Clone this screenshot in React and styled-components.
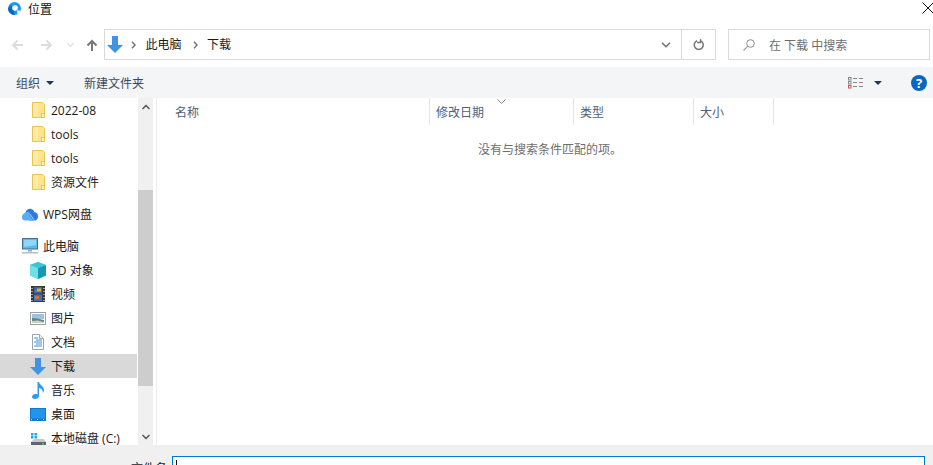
import React from "react";
import styled, { createGlobalStyle } from "styled-components";
import { FiChevronDown, FiChevronUp } from "react-icons/fi";

const GlobalStyle = createGlobalStyle`
	html, body {
		margin: 0;
		padding: 0;
		width: 933px;
		height: 465px;
		overflow: hidden;
		background: #fff;
		font-family: "Open Sans", "Noto Sans CJK SC", sans-serif;
		font-size: 12px;
		color: #1a1a1a;
	}
	* {
		box-sizing: border-box;
	}
`;

const treeItems = [
	{ label: "2022-08", icon: "folder", level: 1, gap: 0 },
	{ label: "tools", icon: "folder", level: 1, gap: 0 },
	{ label: "tools", icon: "folder", level: 1, gap: 0 },
	{ label: "资源文件", icon: "folder", level: 1, gap: 0 },
	{ label: "WPS网盘", icon: "cloud", level: 0, gap: 8 },
	{ label: "此电脑", icon: "pc", level: 0, gap: 8 },
	{ label: "3D 对象", icon: "cube", level: 1, gap: 0 },
	{ label: "视频", icon: "film", level: 1, gap: 0 },
	{ label: "图片", icon: "picture", level: 1, gap: 0 },
	{ label: "文档", icon: "doc", level: 1, gap: 0 },
	{ label: "下载", icon: "download", level: 1, gap: 0, selected: true },
	{ label: "音乐", icon: "music", level: 1, gap: 0 },
	{ label: "桌面", icon: "desktop", level: 1, gap: 0 },
	{ label: "本地磁盘 (C:)", icon: "disk", level: 1, gap: 0 },
];

const columns = [
	{ label: "名称", width: 270, pad: 15 },
	{ label: "修改日期", width: 144, pad: 6, sorted: true },
	{ label: "类型", width: 120, pad: 6 },
	{ label: "大小", width: 80, pad: 6 },
];

function TreeIcon({ name }) {
	switch (name) {
		case "folder":
			return (
				<svg width="13" height="16" viewBox="0 0 13 16">
					<path d="M.5.500h10l2 2v13H.5z" fill="#fde58e" stroke="#e9c54f" />
					<path d="M1 1h5v14H1z" fill="#fdeaa4" />
					<path d="M9.500 15.500v-4h3v4z" fill="#fff6d0" stroke="#e9c54f" />
				</svg>
			);
		case "cloud":
			return (
				<svg width="17" height="13" viewBox="0 0 17 13">
					<path d="M3.500 5C4 2 6.500 0 9 .3c2.300.3 3.800 2 4.200 3.700C15.500 4 17 6 17 8.500 17 11 15 13 13 13H8z" fill="#2a7be4" />
					<path d="M3 5c2-.5 3.500.3 4.500 1.500L12 13H3c-1.700 0-3-1.300-3-3.500C0 7 1.300 5.400 3 5z" fill="#57aef5" />
					<path d="M5 4.500c1.500 0 3 1 4 2.300l3.700 5.200" fill="none" stroke="#fff" strokeWidth=".7" />
				</svg>
			);
		case "pc":
			return (
				<svg width="16" height="16" viewBox="0 0 16 16">
					<rect x=".5" y=".5" width="15" height="10.500" fill="#5cb8f5" stroke="#4a6f8c" />
					<path d="M2 2h12v5L2 9z" fill="#8fd8fb" />
					<rect x="6" y="11.500" width="4" height="2" fill="#9aa7b2" />
					<rect y="14" width="16" height="1.500" fill="#b4bec7" />
				</svg>
			);
		case "cube":
			return (
				<svg width="16" height="17" viewBox="0 0 16 17">
					<path d="M8 0l8 3v10.500L8 17l-8-3.500V3z" fill="#4fd2dd" />
					<path d="M0 3l8 3v11l-8-3.500z" fill="#6fe0e6" />
					<path d="M16 3L8 6v11l8-3.500z" fill="#139ab3" />
					<path d="M8 0l8 3-8 3-8-3z" fill="#3cc4d6" />
				</svg>
			);
		case "film":
			return (
				<svg width="14" height="16" viewBox="0 0 14 16">
					<rect width="14" height="16" fill="#3a3a3a" />
					<rect x="3" y="1" width="8" height="6.500" fill="#3c62b8" />
					<rect x="3" y="8.500" width="8" height="6.500" fill="#3c72d0" />
					<rect x="6" y="2.500" width="4" height="3" fill="#e0b030" />
					<rect x="4" y="4" width="2" height="2" fill="#3f9a58" />
					<rect x="4" y="10" width="4" height="3" fill="#d9702c" />
					<path d="M1 2v1M1 5v1M1 8v1M1 11v1M1 14v1M13 2v1M13 5v1M13 8v1M13 11v1M13 14v1" stroke="#fff" />
				</svg>
			);
		case "picture":
			return (
				<svg width="16" height="13" viewBox="0 0 16 13">
					<rect x=".5" y=".5" width="15" height="12" fill="#fff" stroke="#9aa0a5" />
					<rect x="2" y="2" width="12" height="5" fill="#9cc2e2" />
					<path d="M2 6l5 .5L14 8v3H2z" fill="#5f8a72" />
					<path d="M2 9l6-.5 6 1.500V11H2z" fill="#c9cfc4" />
				</svg>
			);
		case "doc":
			return (
				<svg width="12" height="16" viewBox="0 0 12 16">
					<path d="M.5.500h7l4 4v11H.5z" fill="#fff" stroke="#9aa3ab" />
					<path d="M7.500.500v4h4" fill="#eef2f5" stroke="#9aa3ab" />
					<path d="M2 4h4M4 6h6M2 8h8M4 10h6M2 12h8" stroke="#3f8fd8" />
				</svg>
			);
		case "download":
			return <BlueArrow width={16} height={17} />;
		case "music":
			return (
				<svg width="13" height="17" viewBox="0 0 13 17">
					<path d="M5.500 0H7c.3 3 5 4 5 8 0 1-.3 2-1 3 0-3-2-4.500-4-5v8c0 2-2 3-4 3-1.700 0-3-.8-3-2 0-1.700 2-3 3.500-3 .7 0 1.500.1 2 .5z" fill="#2f9bef" />
				</svg>
			);
		case "desktop":
			return (
				<svg width="16" height="13" viewBox="0 0 16 13">
					<rect width="16" height="13" fill="#0f78d4" />
					<path d="M1 1h14v9.500H1z" fill="#1f95ec" />
					<path d="M1 11.500h14" stroke="#bfe0f8" strokeDasharray="1 5" />
				</svg>
			);
		case "disk":
			return (
				<svg width="15" height="18" viewBox="0 0 15 18">
					<rect x="0" y="4" width="2.500" height="2.500" fill="#1ea7f0" />
					<rect x="3.500" y="4" width="2.500" height="2.500" fill="#1ea7f0" />
					<rect x="0" y="7" width="2.500" height="2.500" fill="#1ea7f0" />
					<rect x="3.500" y="7" width="2.500" height="2.500" fill="#1ea7f0" />
					<path d="M3 10h10l2 3H0z" fill="#c4cacf" />
					<rect y="13" width="15" height="5" fill="#5e666c" />
					<rect x="11" y="14" width="2" height="1.500" fill="#46d160" />
				</svg>
			);
		default:
			return null;
	}
}

function BlueArrow({ width, height }) {
	return (
		<svg width={width} height={height} viewBox="0 0 16 17">
			<path d="M5 0h6v9h5l-8 8-8-8h5z" fill="#3f94e4" />
		</svg>
	);
}

function NavArrow({ dir, color }) {
	const d =
		dir === "left"
			? "M12 6H2M6.500 1.500L2 6l4.500 4.500"
			: dir === "right"
				? "M0 6h10M5.500 1.500L10 6l-4.500 4.500"
				: "M6 12V2M1.500 6.500L6 2l4.500 4.500";
	return (
		<svg width="12" height="12" viewBox="0 0 12 12">
			<path d={d} fill="none" stroke={color} strokeWidth="2" />
		</svg>
	);
}

function CrumbArrow() {
	return (
		<Crumb width="5" height="8" viewBox="0 0 5 8">
			<path d="M1 .8L4 4 1 7.200" fill="none" stroke="#777" strokeWidth="1.500" />
		</Crumb>
	);
}

function App() {
	return (
		<Window>
			<GlobalStyle />
			<TitleBar>
				<TitleGroup>
					<svg width="13" height="13" viewBox="0 0 13 13">
						<circle cx="6.500" cy="6.500" r="6.500" fill="#1a9af0" />
						<path d="M0 6.500A6.500 6.500 0 0 0 6.500 13L6 8 3 3z" fill="#0a68c4" />
						<circle cx="7" cy="6" r="2.800" fill="#fff" />
						<path d="M9 8.500h3v2l-2 2-1-2z" fill="#fff" />
					</svg>
					<TitleText>位置</TitleText>
				</TitleGroup>
				<CloseIcon width="12" height="12" viewBox="0 0 12 12">
					<path d="M.5.500l11 11M11.500.500l-11 11" stroke="#111" strokeWidth="1" />
				</CloseIcon>
			</TitleBar>

			<NavRow>
				<NavButtons>
					<NavArrow dir="left" color="#dcdcdc" />
					<NavArrow dir="right" color="#dcdcdc" />
					<SmallChevron />
					<NavArrow dir="up" color="#777" />
				</NavButtons>
				<AddressBox>
					<BlueArrow width={16} height={17} />
					<CrumbArrow />
					<CrumbText>此电脑</CrumbText>
					<CrumbArrow />
					<CrumbText>下载</CrumbText>
					<AddressEnd>
						<FiChevronDown size={14} color="#777" strokeWidth={3} />
					</AddressEnd>
					<RefreshCell>
						<svg width="12" height="12" viewBox="0 0 12 12">
							<path d="M4 1.800a4.500 4.500 0 1 0 3.500 0" fill="none" stroke="#777" strokeWidth="1.500" />
							<path d="M7.500 0v3.500H4" fill="none" stroke="#777" strokeWidth="1.300" />
						</svg>
					</RefreshCell>
				</AddressBox>
				<SearchBox>
					<svg width="12" height="12" viewBox="0 0 12 12">
						<circle cx="7.500" cy="4.500" r="3.800" fill="none" stroke="#8a8a8a" />
						<path d="M4.800 7.200L.5 11.500" stroke="#a89a8c" strokeWidth="1.100" />
					</svg>
					<SearchHint>在 下载 中搜索</SearchHint>
				</SearchBox>
			</NavRow>

			<Toolbar>
				<ToolbarLeft>
					<ToolButton>
						组织
						<Caret />
					</ToolButton>
					<ToolButton>新建文件夹</ToolButton>
				</ToolbarLeft>
				<ToolbarRight>
					<svg width="16" height="12" viewBox="0 0 16 12">
						<rect x=".5" y=".5" width="2.500" height="2.500" fill="#fff" stroke="#888" />
						<rect x=".5" y="4.500" width="2.500" height="2.500" fill="#fff" stroke="#888" />
						<rect x=".5" y="8.500" width="2.500" height="2.500" fill="#fff" stroke="#c55" />
						<path d="M5 1.500h4M11 1.500h4M5 5.500h4M11 5.500h4M5 9.500h4M11 9.500h4" stroke="#888" />
					</svg>
					<Caret />
					<HelpBadge>?</HelpBadge>
				</ToolbarRight>
			</Toolbar>

			<Body>
				<Sidebar>
					<Tree>
						{treeItems.map((item, i) => (
							<TreeRow key={i} $level={item.level} $gap={item.gap} $selected={item.selected}>
								<IconSlot>
									<TreeIcon name={item.icon} />
								</IconSlot>
								<span>{item.label}</span>
							</TreeRow>
						))}
					</Tree>
					<ScrollBar>
						<ScrollButton>
							<FiChevronUp size={12} color="#606060" strokeWidth={3.500} />
						</ScrollButton>
						<ScrollTrack>
							<ScrollThumb />
						</ScrollTrack>
						<ScrollButton>
							<FiChevronDown size={12} color="#606060" strokeWidth={3.500} />
						</ScrollButton>
					</ScrollBar>
				</Sidebar>
				<Content>
					<HeaderRow>
						{columns.map((col) => (
							<HeaderCell key={col.label} $width={col.width} $pad={col.pad}>
								{col.label}
								{col.sorted && (
									<SortMark width="9" height="5" viewBox="0 0 9 5">
										<path d="M.5.500l4 4 4-4" fill="none" stroke="#888" />
									</SortMark>
								)}
							</HeaderCell>
						))}
					</HeaderRow>
					<EmptyText>没有与搜索条件匹配的项。</EmptyText>
				</Content>
			</Body>

			<Footer>
				<FileLabel>文件名:</FileLabel>
				<FileInput>
					<TextCaret />
				</FileInput>
			</Footer>
		</Window>
	);
}

export default App;

const Window = styled.div`
	display: flex;
	flex-direction: column;
	width: 933px;
	height: 465px;
	overflow: hidden;
	background: #fff;
`;

const TitleBar = styled.div`
	display: flex;
	align-items: center;
	justify-content: space-between;
	height: 17px;
	padding: 0 0 0 8px;
`;

const TitleGroup = styled.div`
	display: flex;
	align-items: center;
	gap: 7px;
`;

const TitleText = styled.span`
	font-size: 12px;
	color: #111;
`;

const CloseIcon = styled.svg`
	flex: none;
	margin: 0 -1px 1px 0;
`;

const NavRow = styled.div`
	display: flex;
	align-items: flex-start;
	height: 50px;
	padding: 12px 3px 0 0;
`;

const NavButtons = styled.div`
	display: flex;
	flex: none;
	align-items: center;
	width: 104px;
	height: 31px;
	padding-left: 11px;
	& > svg:nth-child(1) {
		margin-right: 18px;
	}
	& > svg:nth-child(2) {
		margin-right: 15px;
	}
	& > svg:nth-child(4) {
		margin-left: 13px;
	}
`;

const SmallChevron = styled.span`
	width: 5px;
	height: 5px;
	margin-top: -3px;
	border-right: 1px solid #d9d9d9;
	border-bottom: 1px solid #d9d9d9;
	transform: rotate(45deg);
`;

const AddressBox = styled.div`
	display: flex;
	flex: none;
	align-items: center;
	width: 612px;
	height: 31px;
	padding-left: 2px;
	border: 1px solid #d9d9d9;
`;

const Crumb = styled.svg`
	flex: none;
	margin: 0 9.500px 0 8px;
`;

const CrumbText = styled.span`
	margin: 0 3px 2px 0;
	font-size: 12px;
	color: #1a1a1a;
`;

const AddressEnd = styled.div`
	display: flex;
	align-items: center;
	justify-content: center;
	width: 30px;
	margin-left: auto;
`;

const RefreshCell = styled.div`
	display: flex;
	align-items: center;
	justify-content: center;
	width: 34px;
	height: 100%;
	border-left: 1px solid #d9d9d9;
`;

const SearchBox = styled.div`
	display: flex;
	flex: none;
	align-items: center;
	width: 202px;
	height: 31px;
	margin-left: 12px;
	padding-left: 14px;
	border: 1px solid #d9d9d9;
`;

const SearchHint = styled.span`
	margin-left: 14px;
	font-size: 12px;
	color: #6d6d6d;
`;

const Toolbar = styled.div`
	display: flex;
	align-items: center;
	justify-content: space-between;
	height: 31px;
	padding: 0 6px 0 16px;
	background: #f4f5f7;
`;

const ToolbarLeft = styled.div`
	display: flex;
	align-items: center;
	gap: 30px;
`;

const ToolButton = styled.div`
	display: flex;
	align-items: center;
	gap: 6px;
	font-size: 12px;
	color: #3a4a5c;
`;

const Caret = styled.span`
	width: 0;
	height: 0;
	border-left: 4px solid transparent;
	border-right: 4px solid transparent;
	border-top: 4px solid #1f3556;
`;

const ToolbarRight = styled.div`
	display: flex;
	align-items: center;
	gap: 10px;
`;

const HelpBadge = styled.div`
	display: flex;
	align-items: center;
	justify-content: center;
	width: 16px;
	height: 16px;
	margin-left: 19px;
	border-radius: 50%;
	background: #0a66c2;
	color: #fff;
	font-size: 13px;
	font-weight: bold;
`;

const Body = styled.div`
	display: flex;
	flex: 1;
	min-height: 0;
`;

const Sidebar = styled.div`
	display: flex;
	flex: none;
	width: 157px;
	padding-right: 3px;
	border-right: 1px solid #eeeeee;
`;

const Tree = styled.div`
	flex: none;
	width: 137px;
	margin-right: 1px;
	overflow: hidden;
`;

const TreeRow = styled.div`
	display: flex;
	align-items: center;
	gap: 5px;
	height: 24px;
	margin-top: ${(p) => p.$gap}px;
	padding-left: ${(p) => (p.$level === 1 ? 30 : 22)}px;
	background: ${(p) => (p.$selected ? "#d9d9d9" : "transparent")};
	font-size: 12px;
	white-space: nowrap;
	color: #1a1a1a;
`;

const IconSlot = styled.span`
	display: flex;
	flex: none;
	align-items: center;
	justify-content: center;
	width: 16px;
	height: 18px;
`;

const ScrollBar = styled.div`
	display: flex;
	flex: none;
	flex-direction: column;
	width: 15px;
	background: #f0f0f0;
`;

const ScrollButton = styled.div`
	display: flex;
	flex: none;
	align-items: center;
	justify-content: center;
	height: 17px;
`;

const ScrollTrack = styled.div`
	flex: 1;
	padding-top: 75px;
`;

const ScrollThumb = styled.div`
	height: 196px;
	background: #cdcdcd;
`;

const Content = styled.div`
	flex: 1;
	min-width: 0;
`;

const HeaderRow = styled.div`
	display: flex;
	height: 27px;
	padding-left: 3px;
`;

const HeaderCell = styled.div`
	position: relative;
	display: flex;
	align-items: center;
	width: ${(p) => p.$width}px;
	padding-left: ${(p) => p.$pad}px;
	border-right: 1px solid #e5e5e5;
	font-size: 12px;
	color: #4c607a;
`;

const SortMark = styled.svg`
	position: absolute;
	top: 1px;
	left: 67px;
`;

const EmptyText = styled.div`
	margin-top: 15px;
	padding-left: 10px;
	text-align: center;
	font-size: 12px;
	color: #6d6d6d;
`;

const Footer = styled.div`
	display: flex;
	flex: none;
	align-items: flex-start;
	height: 20px;
	padding: 11px 8px 0 131px;
	background: #f0f0f0;
`;

const FileLabel = styled.span`
	flex: none;
	width: 41px;
	margin-top: 6px;
	font-size: 12px;
	line-height: 14px;
	color: #1a1a1a;
`;

const FileInput = styled.div`
	flex: 1;
	height: 20px;
	padding: 3px 0 0 3px;
	border: 1px solid #0078d7;
	background: #fff;
`;

const TextCaret = styled.div`
	width: 1px;
	height: 12px;
	background: #111;
`;
